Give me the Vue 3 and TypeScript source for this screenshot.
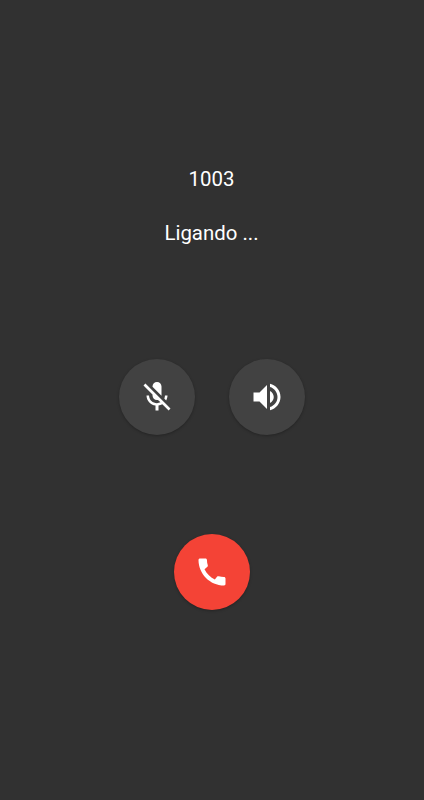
<script setup lang="ts">
interface CallControl {
  id: string
  label: string
  path: string
}

const callee = '1003'
const status = 'Ligando ...'

const controls: CallControl[] = [
  {
    id: 'mute',
    label: 'Mudo',
    path: 'M19 11h-1.7c0 .74-.16 1.43-.43 2.05l1.23 1.23c.56-.98.9-2.09.9-3.28zm-4.02.17c0-.06.02-.11.02-.17V5c0-1.66-1.34-3-3-3S9 3.34 9 5v.18l5.98 5.99zM4.27 3L3 4.27l6.01 6.01V11c0 1.66 1.33 3 2.99 3 .22 0 .44-.03.65-.08l1.66 1.66c-.71.33-1.5.52-2.31.52-2.76 0-5.3-2.1-5.3-5.1H5c0 3.41 2.72 6.23 6 6.72V21h2v-3.28c.91-.13 1.77-.45 2.54-.9L19.73 21 21 19.73 4.27 3z',
  },
  {
    id: 'speaker',
    label: 'Alto-falante',
    path: 'M3 9v6h4l5 5V4L7 9H3zm13.5 3c0-1.77-1.02-3.29-2.5-4.03v8.05c1.48-.73 2.5-2.25 2.5-4.02zM14 3.23v2.06c2.89.86 5 3.54 5 6.71s-2.11 5.85-5 6.71v2.06c4.01-.91 7-4.49 7-8.77s-2.99-7.86-7-8.77z',
  },
]

const phonePath =
  'M20.01 15.38c-1.23 0-2.42-.2-3.53-.56-.35-.12-.74-.03-1.01.24l-1.57 1.97c-2.83-1.35-5.48-3.9-6.89-6.83l1.95-1.66c.27-.28.35-.67.24-1.02-.37-1.11-.56-2.3-.56-3.53 0-.54-.45-.99-.99-.99H4.19C3.65 3 3 3.24 3 3.99 3 13.28 10.73 21 20.01 21c.71 0 .99-.63.99-1.18v-3.45c0-.54-.45-.99-.99-.99z'
</script>

<template>
  <main class="call">
    <p class="line callee">{{ callee }}</p>
    <p class="line status">{{ status }}</p>
    <div class="controls">
      <button v-for="c in controls" :key="c.id" class="round" :aria-label="c.label">
        <svg class="icon" viewBox="0 0 24 24"><path :d="c.path" /></svg>
      </button>
    </div>
    <button class="round hangup" aria-label="Desligar">
      <svg class="icon" viewBox="0 0 24 24"><path :d="phonePath" /></svg>
    </button>
  </main>
</template>

<style>
body {
  margin: 0;
  background: #313131;
}
</style>

<style scoped>
.call {
  box-sizing: border-box;
  min-height: 100vh;
  padding-top: 167px;
  display: flex;
  flex-direction: column;
  align-items: center;
  background: #313131;
  color: #fff;
  font-family: Roboto, 'Liberation Sans', sans-serif;
}
.line {
  margin: 0;
  padding-right: 1px;
  font-size: 20.4px;
  line-height: 24px;
}
.status {
  margin-top: 30px;
}
.controls {
  display: flex;
  gap: 34px;
  margin-top: 114px;
}
.round {
  width: 76px;
  height: 76px;
  padding: 0;
  border: 0;
  border-radius: 50%;
  display: flex;
  align-items: center;
  justify-content: center;
  background: #424242;
  box-shadow: 0 1px 3px rgba(0, 0, 0, 0.28);
}
.hangup {
  margin-top: 99px;
  background: #f44336;
}
.icon {
  width: 36px;
  height: 36px;
  fill: #fff;
}
</style>
